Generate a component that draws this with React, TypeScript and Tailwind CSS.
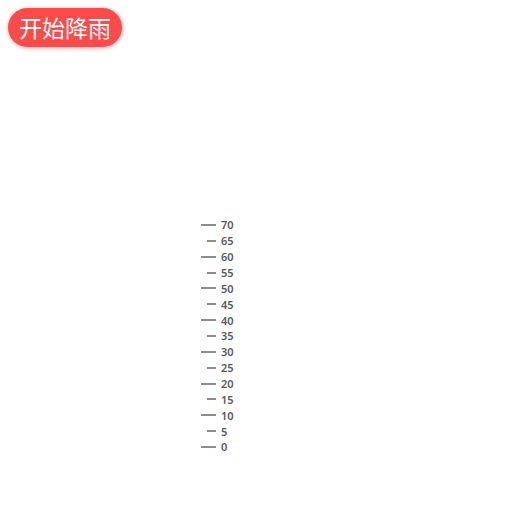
import React from "react";

const values = [70, 65, 60, 55, 50, 45, 40, 35, 30, 25, 20, 15, 10, 5, 0];

export default function App() {
  return (
    <div className="relative w-[512px] h-[512px] bg-white" style={{ fontFamily: '"Noto Sans", "Noto Sans CJK SC", sans-serif' }}>
      <div className="pt-2 pl-2">
        <button className="h-[39px] w-[114px] flex items-center justify-center rounded-full bg-[#ff4a4a] text-white text-[23px] leading-none shadow-[0_1px_4px_rgba(255,77,79,0.55)]" style={{ fontFamily: '"Noto Sans CJK SC", sans-serif' }}>
          开始降雨
        </button>
      </div>
      <div className="mt-[170px] ml-[201px] flex flex-col">
        {values.map((v) => (
          <div key={v} className="h-[15.86px] flex items-center">
            <div className="w-[15px] flex justify-end">
              <div className={`h-[2px] bg-[#8c8c8c] ${v % 10 === 0 ? "w-[15px]" : "w-[9px]"}`} />
            </div>
            <span className="ml-[5px] text-[11px] font-semibold text-[#5a5a5a] leading-none">{v}</span>
          </div>
        ))}
      </div>
    </div>
  );
}
